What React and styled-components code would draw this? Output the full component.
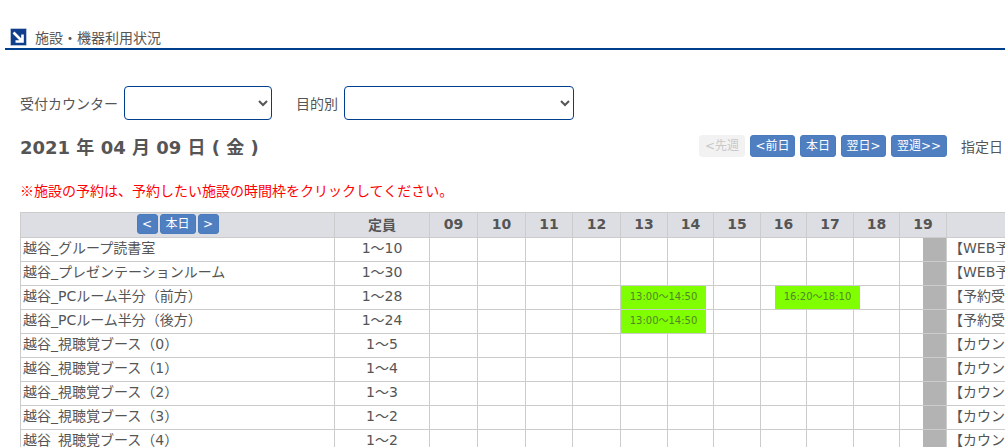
import React from 'react';
import styled, { createGlobalStyle } from 'styled-components';

const font = '"DejaVu Sans", "Noto Sans CJK JP", sans-serif';
const cjk = '"Noto Sans CJK JP", sans-serif';

const GlobalStyle = createGlobalStyle`
  html, body {
    margin: 0;
    padding: 0;
    background: #fff;
    overflow: hidden;
  }
  body {
    width: 1005px;
    height: 447px;
    font-family: ${font};
    font-size: 14px;
    color: #555;
  }
`;

const Page = styled.div`
  width: 1005px;
  height: 447px;
  overflow: hidden;
  padding: 28px 0 0 5px;
  box-sizing: border-box;
`;

const TitleBar = styled.div`
  display: flex;
  align-items: flex-start;
  gap: 8px;
  height: 20px;
  padding: 0 0 0 5px;
  border-bottom: 2px solid #003f8e;
  font-family: ${cjk};
  font-size: 14px;
  line-height: 18px;
`;

const TitleIcon = styled.svg`
  width: 17px;
  height: 18px;
  display: block;
`;

const Content = styled.div`
  padding: 0 0 0 15px;
`;

const FilterRow = styled.div`
  display: flex;
  align-items: center;
  height: 34px;
  margin-top: 36px;
`;

const FilterLabel = styled.label`
  font-family: ${cjk};
  font-size: 14px;
  margin-right: ${(p) => p.$gap}px;
`;

const Select = styled.select`
  width: ${(p) => p.$width}px;
  height: 34px;
  margin-right: 24px;
  box-sizing: border-box;
  border: 1px solid #003f8e;
  border-radius: 4px;
  background: #fff;
  color: #555;
  font-size: 14px;
`;

const DateRow = styled.div`
  display: flex;
  align-items: center;
  justify-content: space-between;
  height: 24px;
  margin-top: 14px;
`;

const DateTitle = styled.div`
  font-size: 18px;
  font-weight: 700;
  color: #555;
`;

const DateNav = styled.div`
  display: flex;
  align-items: center;
  gap: 5px;
  margin-right: 1px;
  white-space: nowrap;
`;

const NavButton = styled.button`
  width: ${(p) => p.$width}px;
  height: 22px;
  padding: 0;
  box-sizing: border-box;
  border: 1px solid ${(p) => (p.disabled ? '#f2f2f2' : '#4a7cbd')};
  border-radius: 3px;
  background: ${(p) => (p.disabled ? '#f2f2f2' : '#4f7fc1')};
  color: ${(p) => (p.disabled ? '#c8c8c8' : '#fff')};
  font-family: ${font};
  font-size: 12px;
  line-height: 20px;
  white-space: nowrap;
`;

const DateLabel = styled.span`
  font-family: ${cjk};
  font-size: 14px;
  margin-left: 9px;
  width: 43px;
`;

const Notice = styled.p`
  margin: 22px 0 0;
  height: 20px;
  color: #f00;
  font-family: ${cjk};
  font-size: 14px;
  line-height: 20px;
`;

const Table = styled.table`
  margin-top: 12px;
  table-layout: fixed;
  width: 1180px;
  border-collapse: collapse;
`;

const HeadCell = styled.th`
  height: 22px;
  padding: 0 0 2px;
  border: 1px solid #ccc;
  background: #dddee3;
  color: #555;
  font-size: 14px;
  font-weight: 700;
  text-align: center;
`;

const HeadTools = styled.div`
  display: flex;
  justify-content: center;
  gap: 2px;
`;

const SmallButton = styled.button`
  width: ${(p) => p.$width}px;
  height: 20px;
  padding: 0;
  border: 1px solid #4a7cbd;
  border-radius: 3px;
  background: #4f7fc1;
  color: #fff;
  font-family: ${font};
  font-size: 12px;
  line-height: 18px;
`;

const Cell = styled.td`
  position: relative;
  height: 20px;
  padding: 0 0 3px;
  border: 1px solid #ccc;
  font-size: 14px;
  line-height: 20px;
  white-space: nowrap;
  overflow: ${(p) => (p.$visible ? 'visible' : 'hidden')};
`;

const NameCell = styled(Cell)`
  padding-left: 2px;
`;

const CapacityCell = styled(Cell)`
  text-align: center;
`;

const StatusCell = styled(Cell)`
  padding-left: 2px;
`;

const Closed = styled.div`
  position: absolute;
  top: 0;
  right: 0;
  bottom: 0;
  width: 23px;
  background: #b3b3b3;
`;

const Booking = styled.div`
  position: absolute;
  z-index: 1;
  top: 0;
  left: 0;
  width: ${(p) => p.$width}px;
  height: 23px;
  margin-left: ${(p) => p.$offset}px;
  background: #7fff00;
  color: #558528;
  font-size: 10px;
  line-height: 22px;
  text-align: center;
`;

const HOURS = ['09', '10', '11', '12', '13', '14', '15', '16', '17', '18', '19'];
const HOUR_WIDTHS = [48, 48, 47, 48, 47, 46, 47, 46, 47, 46, 47];

const ROOMS = [
  { name: '越谷_グループ読書室', cap: '1〜10', status: '【WEB予約' },
  { name: '越谷_プレゼンテーションルーム', cap: '1〜30', status: '【WEB予約' },
  {
    name: '越谷_PCルーム半分（前方）',
    cap: '1〜28',
    status: '【予約受付',
    bookings: { 13: { label: '13:00〜14:50', width: 85, offset: 0 }, 16: { label: '16:20〜18:10', width: 85, offset: 14 } },
  },
  {
    name: '越谷_PCルーム半分（後方）',
    cap: '1〜24',
    status: '【予約受付',
    bookings: { 13: { label: '13:00〜14:50', width: 85, offset: 0 } },
  },
  { name: '越谷_視聴覚ブース（0）', cap: '1〜5', status: '【カウンター' },
  { name: '越谷_視聴覚ブース（1）', cap: '1〜4', status: '【カウンター' },
  { name: '越谷_視聴覚ブース（2）', cap: '1〜3', status: '【カウンター' },
  { name: '越谷_視聴覚ブース（3）', cap: '1〜2', status: '【カウンター' },
  { name: '越谷_視聴覚ブース（4）', cap: '1〜2', status: '【カウンター' },
];

const App = () => (
  <Page>
    <GlobalStyle />
    <TitleBar>
      <TitleIcon viewBox="0 0 17 18">
        <rect x="0.5" y="0.5" width="16" height="17" rx="1" fill="#0f3f8c" stroke="#b8c4da" />
        <path d="M3.5 4.5l8 8M12.5 6.5v7H5.5" fill="none" stroke="#fff" strokeWidth="2.6" />
      </TitleIcon>
      施設・機器利用状況
    </TitleBar>
    <Content>
      <FilterRow>
        <FilterLabel $gap={6}>受付カウンター</FilterLabel>
        <Select $width={148} />
        <FilterLabel $gap={6}>目的別</FilterLabel>
        <Select $width={230} />
      </FilterRow>
      <DateRow>
        <DateTitle>2021 年 04 月 09 日 ( 金 )</DateTitle>
        <DateNav>
          <NavButton disabled $width={46}>&lt;先週</NavButton>
          <NavButton $width={45}>&lt;前日</NavButton>
          <NavButton $width={36}>本日</NavButton>
          <NavButton $width={45}>翌日&gt;</NavButton>
          <NavButton $width={56}>翌週&gt;&gt;</NavButton>
          <DateLabel>指定日</DateLabel>
        </DateNav>
      </DateRow>
      <Notice>※施設の予約は、予約したい施設の時間枠をクリックしてください。</Notice>
      <Table>
        <colgroup>
          <col width="314" />
          <col width="95" />
          {HOUR_WIDTHS.map((w, i) => (
            <col key={i} width={w} />
          ))}
          <col />
        </colgroup>
        <thead>
          <tr>
            <HeadCell>
              <HeadTools>
                <SmallButton $width={21}>&lt;</SmallButton>
                <SmallButton $width={36}>本日</SmallButton>
                <SmallButton $width={21}>&gt;</SmallButton>
              </HeadTools>
            </HeadCell>
            <HeadCell>定員</HeadCell>
            {HOURS.map((h) => (
              <HeadCell key={h}>{h}</HeadCell>
            ))}
            <HeadCell />
          </tr>
        </thead>
        <tbody>
          {ROOMS.map((room) => (
            <tr key={room.name}>
              <NameCell>{room.name}</NameCell>
              <CapacityCell>{room.cap}</CapacityCell>
              {HOURS.map((h) => {
                const booking = room.bookings && room.bookings[Number(h)];
                return (
                  <Cell key={h} $visible={!!booking}>
                    {booking && (
                      <Booking $width={booking.width} $offset={booking.offset}>
                        {booking.label}
                      </Booking>
                    )}
                    {h === '19' && <Closed />}
                  </Cell>
                );
              })}
              <StatusCell>{room.status}</StatusCell>
            </tr>
          ))}
        </tbody>
      </Table>
    </Content>
  </Page>
);

export default App;
